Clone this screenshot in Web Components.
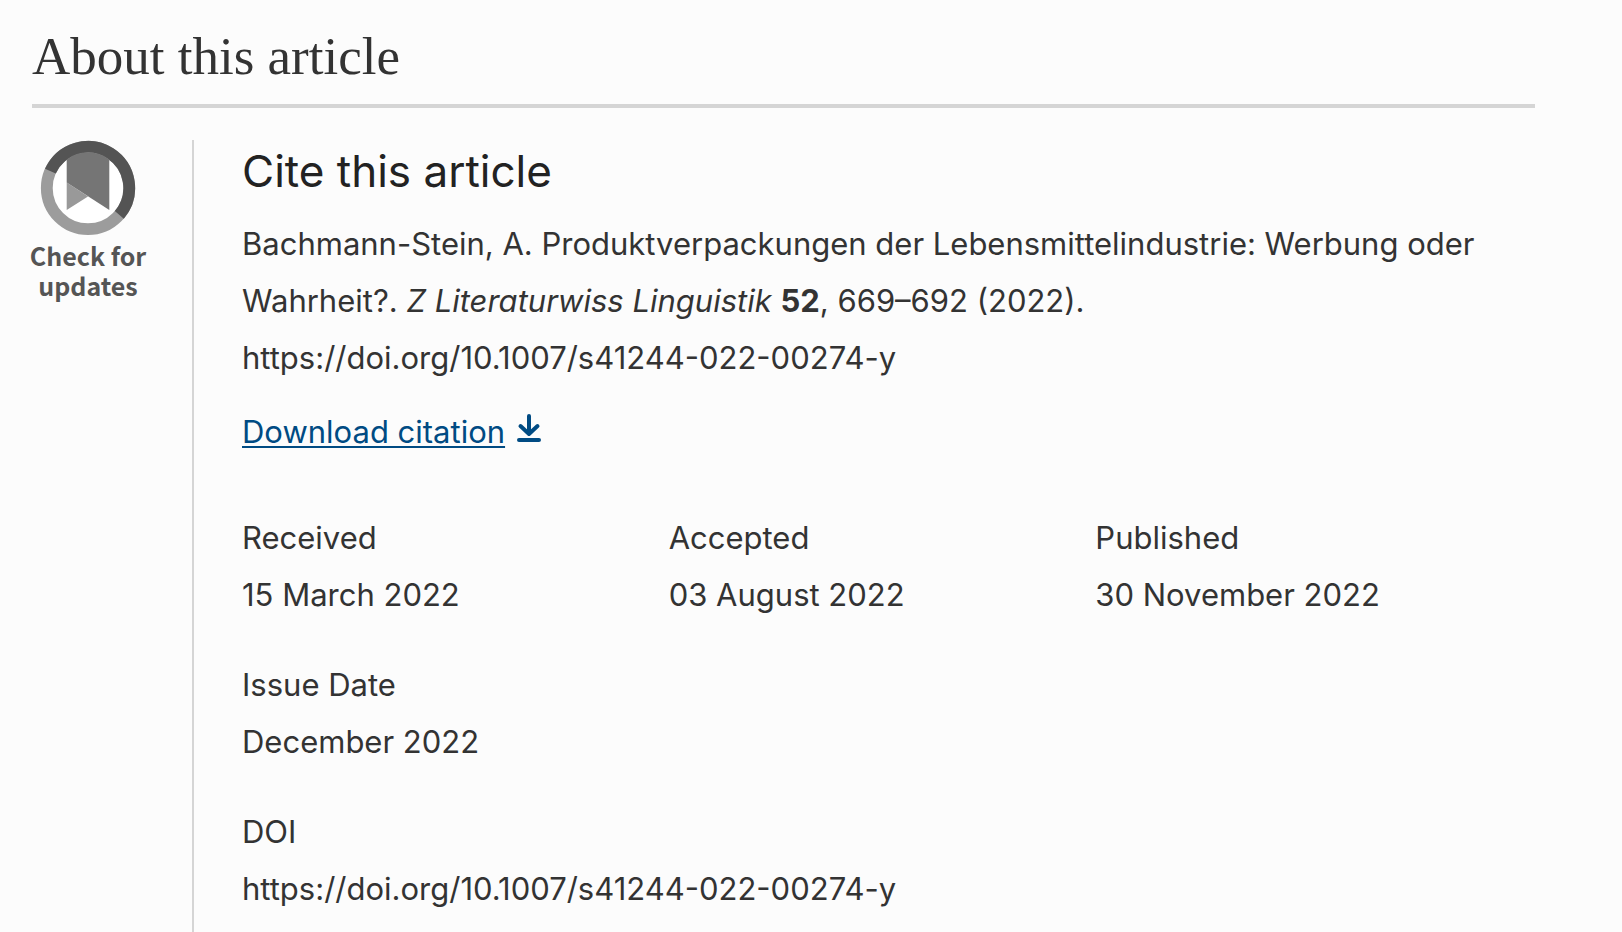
<!DOCTYPE html>
<html lang="en">
<head>
<meta charset="utf-8">
<title>About this article</title>
<style>
    body {
        margin: 0;
        background: #fcfcfc;
        color: #333;
        font: 31px/57px Inter, "Open Sans", sans-serif;
    }
</style>
</head>
<body>
<article-section heading="About this article">
    <crossmark-badge slot="aside"></crossmark-badge>
    <article-citation>Bachmann-Stein, A. Produktverpackungen der Lebensmittelindustrie: Werbung oder Wahrheit?. <i>Z Literaturwiss Linguistik</i> <b>52</b>, 669–692 (2022). https://doi.org/10.1007/s41244-022-00274-y</article-citation>
    <download-link href="#citation">Download citation</download-link>
    <article-history></article-history>
</article-section>

<script>
'use strict';

class ArticleSection extends HTMLElement {
    connectedCallback() {
        const root = this.attachShadow({mode: 'open'});
        root.innerHTML = `
            <style>
                :host {
                    display: block;
                    padding: 24px 87px 0 32px;
                }
                h2 {
                    margin: 0 0 32px;
                    padding-bottom: 16px;
                    border-bottom: 4px solid #d5d5d5;
                    font: 400 53px/64px Georgia, "Liberation Serif", serif;
                }
                .body {
                    display: grid;
                    grid-template-columns: 112px 1fr;
                    column-gap: 48px;
                }
                .content {
                    padding: 0 0 48px 48px;
                    border-left: 2px solid #d5d5d5;
                }
            </style>
            <h2></h2>
            <div class="body">
                <slot name="aside"></slot>
                <div class="content"><slot></slot></div>
            </div>
        `;
        root.querySelector('h2').textContent = this.getAttribute('heading');
    }
}

class CrossmarkBadge extends HTMLElement {
    connectedCallback() {
        const root = this.attachShadow({mode: 'open'});
        root.innerHTML = `
            <style>
                :host {
                    display: block;
                }
                a {
                    display: flex;
                    flex-direction: column;
                    align-items: center;
                    color: #555;
                    font: 700 25px/30px "Noto Sans CJK SC", sans-serif;
                    text-align: center;
                    text-decoration: none;
                }
                svg {
                    width: 96px;
                    height: 96px;
                    margin-bottom: 4px;
                }
                span {
                    white-space: nowrap;
                }
            </style>
            <a href="#updates">
                <svg viewBox="0 0 96 96" aria-hidden="true">
                    <circle cx="48" cy="48" r="36" fill="#fff"/>
                    <g fill="none" stroke-width="11.800">
                        <circle cx="48" cy="48" r="41.200" stroke="#9c9c9c"/>
                        <path d="M10.400 31.200A41.200 41.200 0 1 1 79.300 74.800" stroke="#545454"/>
                    </g>
                    <path d="M26.700 42.500V70L48 56.500 55 61z" fill="#999"/>
                    <path d="M26.700 19.400A35.700 35.700 0 0 1 69.300 19.400V70L26.700 42.500z" fill="#757575"/>
                </svg>
                <span>Check for<br>updates</span>
            </a>
        `;
    }
}

class ArticleCitation extends HTMLElement {
    connectedCallback() {
        const root = this.attachShadow({mode: 'open'});
        root.innerHTML = `
            <style>
                :host {
                    display: block;
                }
                h3 {
                    margin: 0 0 13px;
                    color: #222;
                    font-size: 44px;
                    font-weight: 400;
                    line-height: 62px;
                }
                p {
                    margin: 0 0 17px;
                }
            </style>
            <h3>Cite this article</h3>
            <p><slot></slot></p>
        `;
    }
}

class DownloadLink extends HTMLElement {
    connectedCallback() {
        const root = this.attachShadow({mode: 'open'});
        root.innerHTML = `
            <style>
                :host {
                    display: block;
                    margin-bottom: 49px;
                }
                a {
                    display: flex;
                    align-items: center;
                    gap: 12px;
                    width: fit-content;
                    color: #004b83;
                    text-decoration: none;
                }
                span {
                    text-decoration: underline;
                    text-decoration-thickness: 2px;
                    text-underline-offset: 3px;
                    text-decoration-skip-ink: none;
                }
                svg {
                    width: 24px;
                    height: 28px;
                    margin-bottom: 8px;
                }
            </style>
            <a>
                <span><slot></slot></span>
                <svg viewBox="0 0 24 28" fill="none" stroke="currentColor" stroke-width="4"
                     stroke-linecap="round" stroke-linejoin="round" aria-hidden="true">
                    <path d="M12 2v18M3.500 12l8.500 8L20.500 12M2 26h20"/>
                </svg>
            </a>
        `;
        root.querySelector('a').href = this.getAttribute('href');
    }
}

const entries = [
    ['Received', '15 March 2022'],
    ['Accepted', '03 August 2022'],
    ['Published', '30 November 2022'],
    ['Issue Date', 'December 2022'],
    ['DOI', 'https://doi.org/10.1007/s41244-022-00274-y']
];

class ArticleHistory extends HTMLElement {
    connectedCallback() {
        const root = this.attachShadow({mode: 'open'});
        root.innerHTML = `
            <style>
                :host {
                    display: block;
                    max-width: 1280px;
                }
                dl {
                    display: grid;
                    grid-template-columns: repeat(3, 1fr);
                    row-gap: 33px;
                    margin: 0;
                }
                .wide {
                    grid-column: 1 / -1;
                }
                dd {
                    margin: 0;
                }
            </style>
            <dl></dl>
        `;

        const frg = document.createDocumentFragment();
        entries.forEach(([term, value], index) => {
            const div = document.createElement('div');
            if (index > 2) div.classList.add('wide');

            const dt = document.createElement('dt');
            dt.textContent = term;
            const dd = document.createElement('dd');
            dd.textContent = value;

            div.append(dt, dd);
            frg.appendChild(div);
        });
        root.querySelector('dl').appendChild(frg);
    }
}

customElements.define('article-section', ArticleSection);
customElements.define('crossmark-badge', CrossmarkBadge);
customElements.define('article-citation', ArticleCitation);
customElements.define('download-link', DownloadLink);
customElements.define('article-history', ArticleHistory);
</script>
</body>
</html>
